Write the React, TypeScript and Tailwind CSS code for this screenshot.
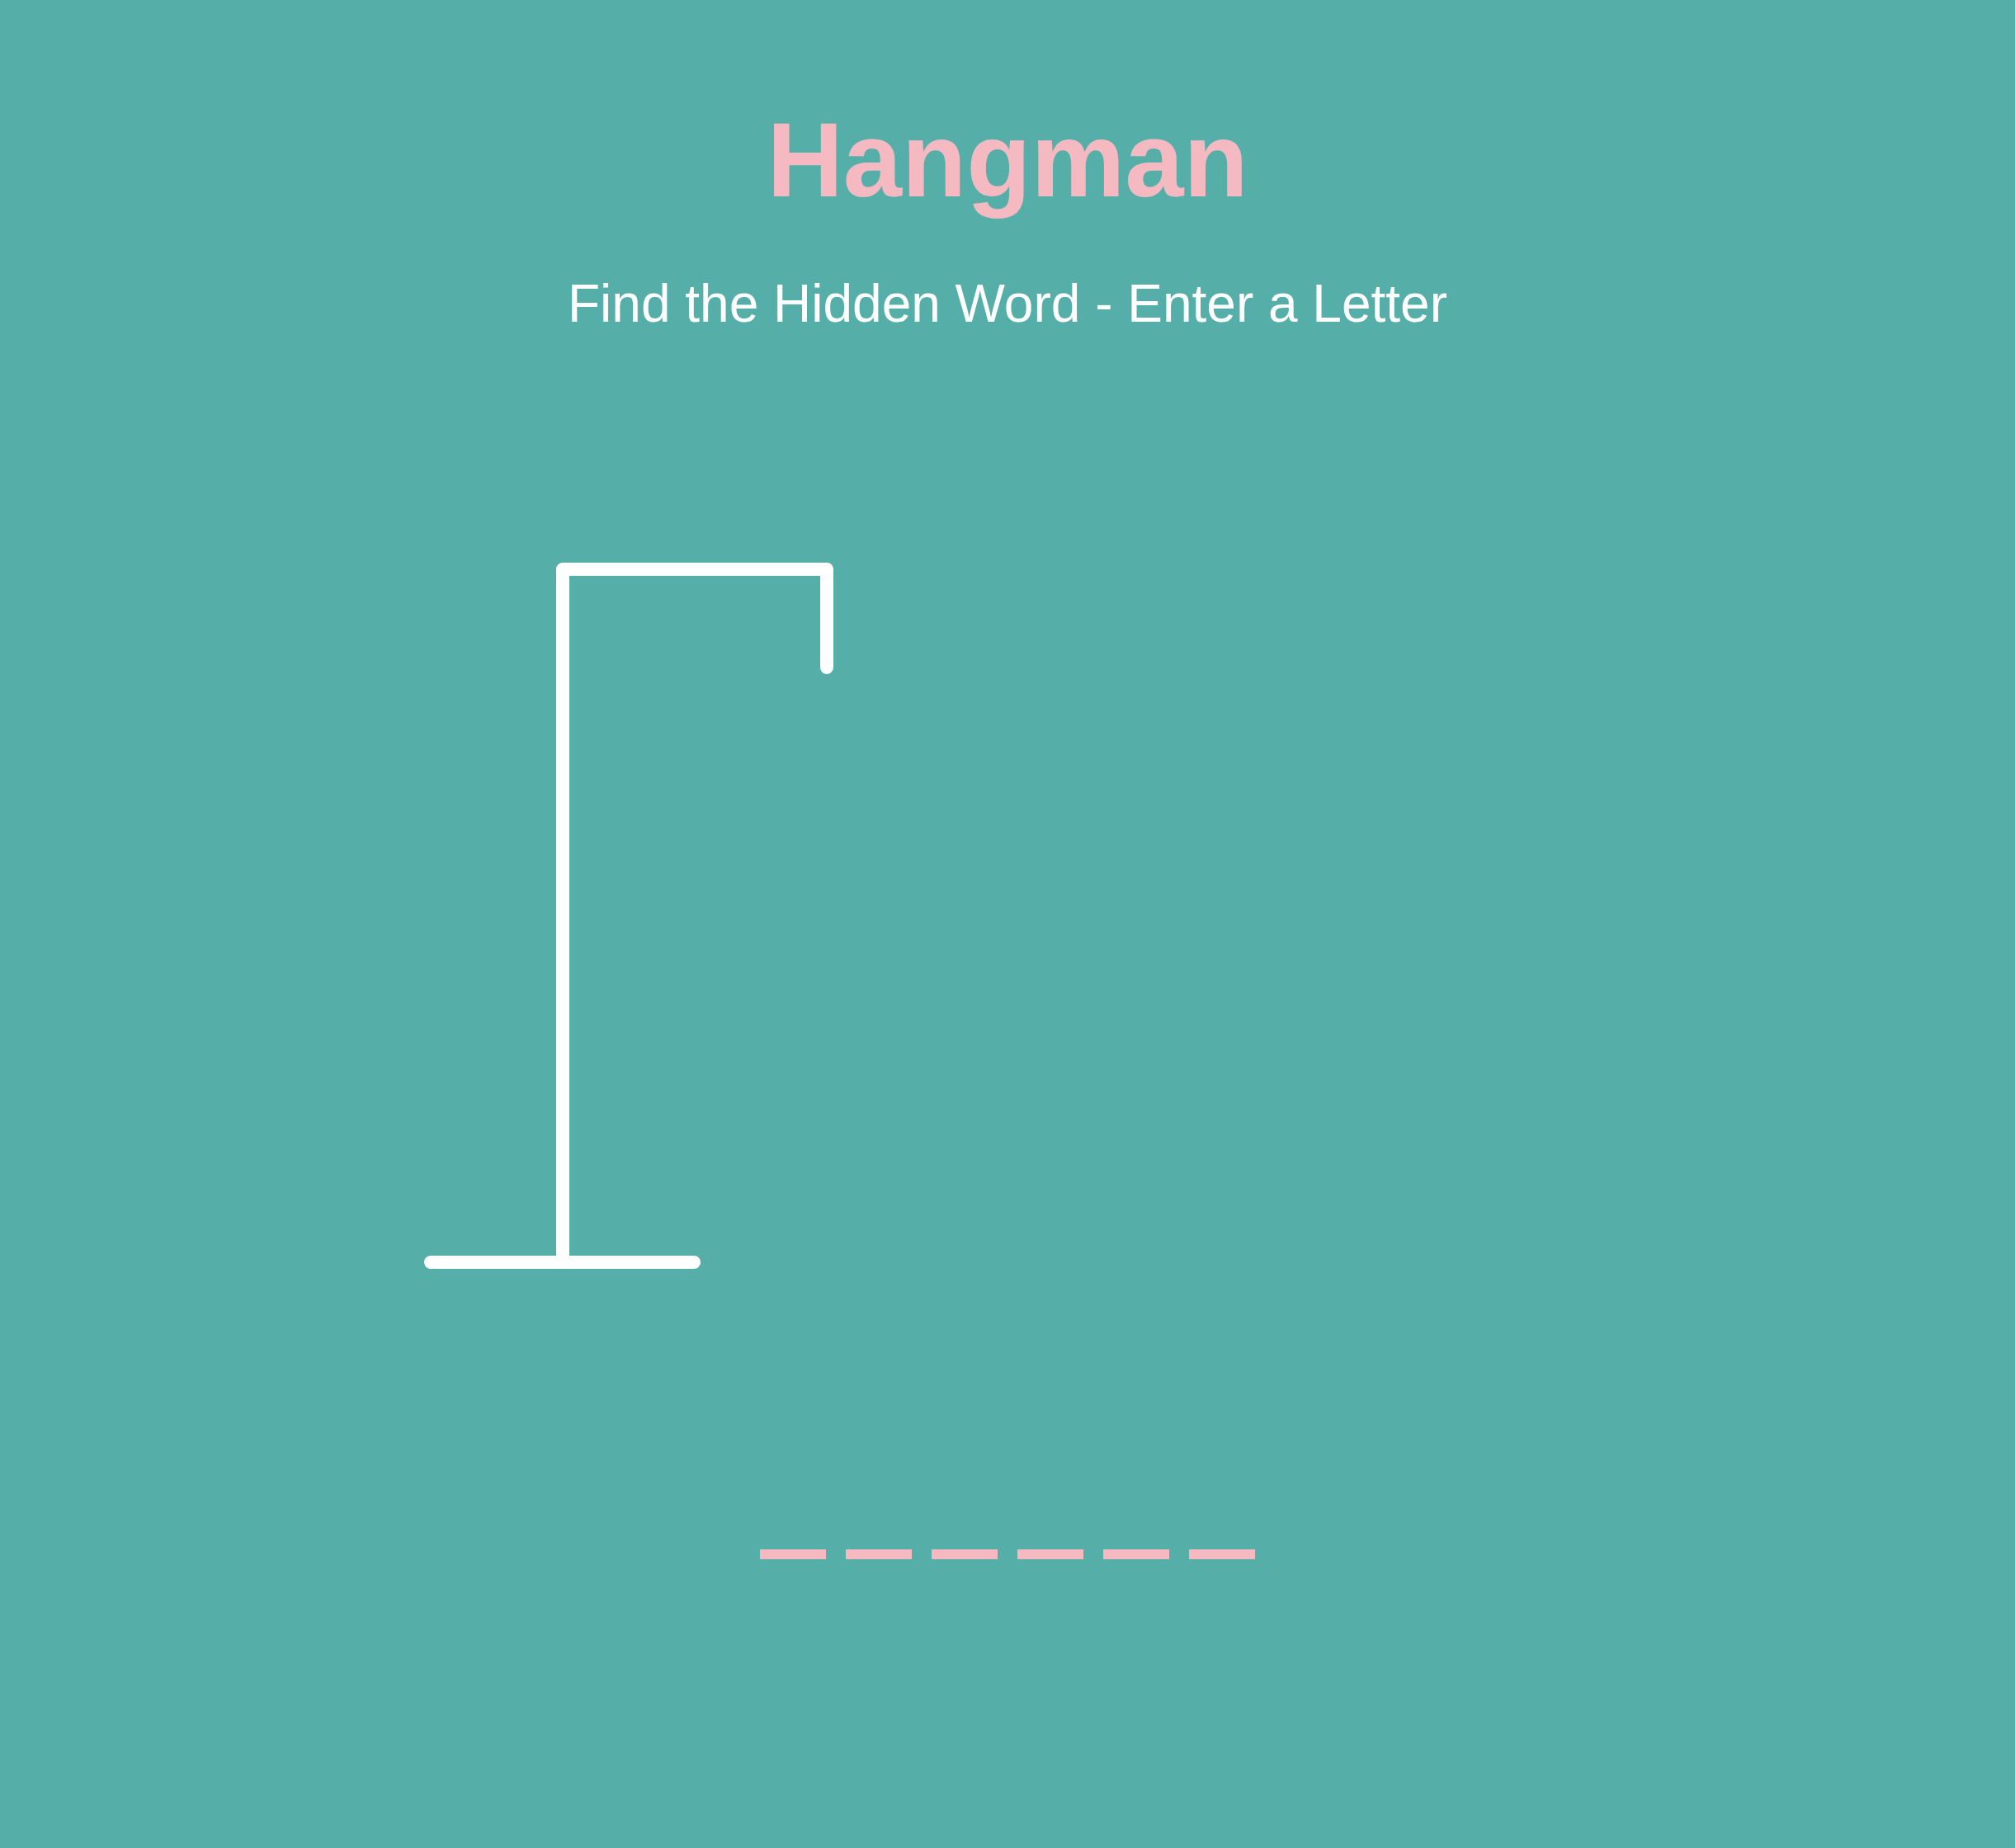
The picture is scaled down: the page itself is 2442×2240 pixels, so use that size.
const word = ["", "", "", "", "", ""];

const Gallows = () => {
  return (
    <svg width="1500" height="1000" viewBox="0 0 1500 1000" className="block">
      <g stroke="#ffffff" strokeWidth="16" strokeLinecap="round" strokeLinejoin="round" fill="none">
        {/* base */}
        <line x1="51" y1="930" x2="370" y2="930" />
        {/* post, beam and rope */}
        <polyline points="211,930 211,90 531,90 531,209" />
      </g>
    </svg>
  );
};

export default function App() {
  return (
    <div className="min-h-screen w-full bg-[#55afa8] flex flex-col items-center font-['Liberation_Sans',Arial,sans-serif]">
      <h1 className="mt-[130px] text-[128px] leading-[128px] font-bold text-[#f5b9c2]">Hangman</h1>
      <p className="mt-[78px] text-[64px] leading-[64px] text-white">Find the Hidden Word - Enter a Letter</p>

      <div className="mt-[200px]">
        <Gallows />
      </div>

      {/* letter slots */}
      <div className="mt-[210px] flex gap-6">
        {word.map((letter, i) => (
          <span
            key={i}
            className="w-20 h-20 border-b-[12px] border-[#f5b9c2] text-[64px] leading-[68px] text-center text-[#f5b9c2]"
          >
            {letter}
          </span>
        ))}
      </div>
    </div>
  );
}
